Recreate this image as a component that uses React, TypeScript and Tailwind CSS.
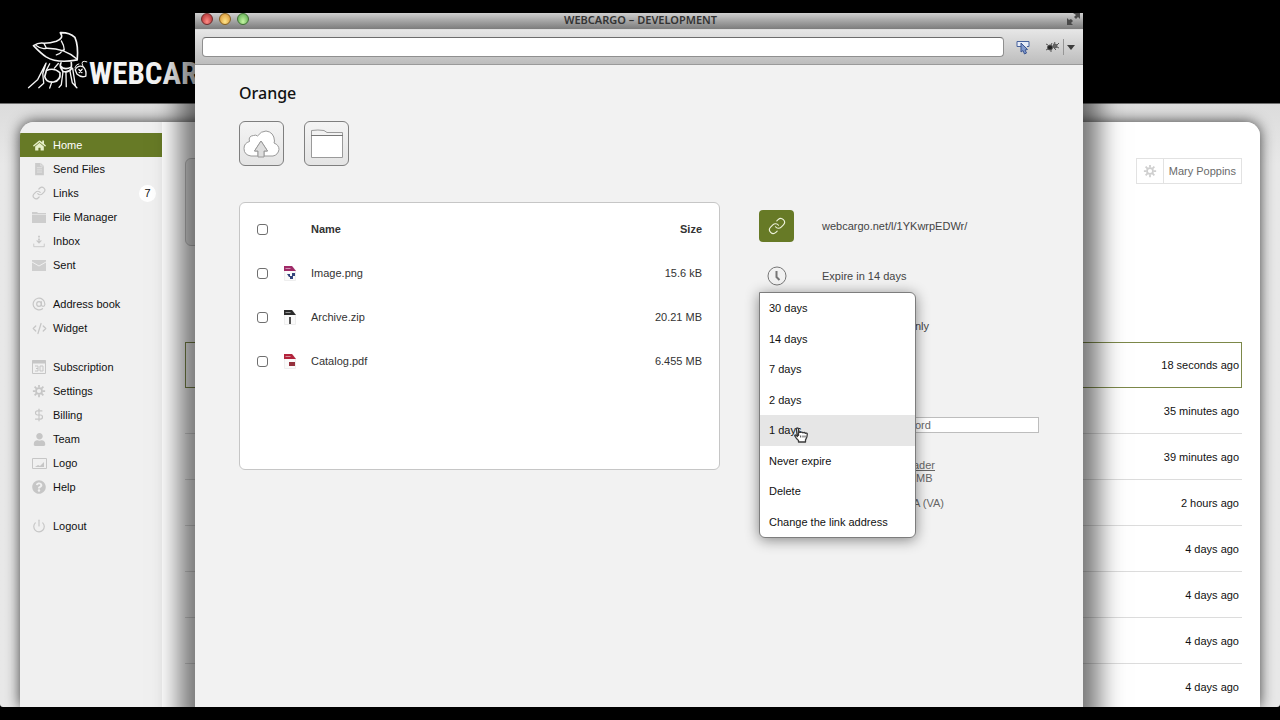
import React from 'react';
import { AtSign, CodeXml, DollarSign, Link as LinkIcon, Power } from 'lucide-react';
import { FaHome, FaQuestionCircle, FaUser } from 'react-icons/fa';

const LeafAnt = () => (
  <svg viewBox="78 94 186 178" className="h-[59px] w-[62px] shrink-0" fill="none" stroke="#f4f4f4" strokeWidth="5" strokeLinecap="round" strokeLinejoin="round">
    <path d="M97 138 Q113 128 129 131 Q148 131 166 125 Q190 116 178 99 Q205 98 222 113 Q233 138 229 181 Q170 193 135 172 Q120 162 97 138Z" />
    <path d="M105 138 Q120 150 136 146 Q190 145 227 178 M181 124 Q190 139 190 151 M166 166 Q178 163 187 151 M129 132 L136 146" strokeWidth="4" />
    <path d="M136 213 Q160 203 177 220 Q180 243 158 248 Q134 250 131 231Z" />
    <path d="M178 199 Q190 214 211 203 Q212 196 211 189 M180 190 Q175 198 181 208 L186 216 Q202 221 212 207" />
    <path d="M223 211 Q232 195 247 202 Q258 213 255 230 Q241 236 228 224Z M234 210 L243 219 M244 209 L235 219" strokeWidth="4" />
    <path d="M246 200 Q237 180 258 187 M222 205 Q226 193 234 193" strokeWidth="3" />
    <path d="M135 191 L110 240 L82 265 M135 191 L125 223 L128 252 L113 265 M146 193 L136 212 M186 217 L181 256 L174 264 M195 218 L196 262 M207 214 L214 250 L228 265 M152 249 L146 266 M215 206 L224 262 M172 192 L160 206" strokeWidth="4" />
  </svg>
);

const Gear = ({ className }: { className: string }) => (
  <svg viewBox="0 0 16 16" className={className} fill="none" stroke="currentColor">
    <circle cx="8" cy="8" r="3.4" strokeWidth="2" />
    <path d="M8 1v3M8 12v3M1 8h3M12 8h3M3 3l2.2 2.2M10.8 10.8L13 13M13 3l-2.2 2.2M5.2 10.8L3 13" strokeWidth="2" />
  </svg>
);

const PageIcon = () => (
  <svg viewBox="0 0 12 16" className="h-[14px] w-[11px]" fill="#cbcbcb">
    <path d="M1 1h6.500l3.500 3.500V15H1z" />
    <path d="M7.500 1v3.500H11M3 6.500h6M3 9h6M3 11.500h6" stroke="#e4e4e4" fill="none" />
  </svg>
);

const FolderIcon = () => (
  <svg viewBox="0 0 14 12" className="h-3 w-[14px]">
    <path d="M0 1h5l1 1h8v10H0z" fill="#cdcdcd" />
    <path d="M0 3.500h14" stroke="#e2e2e2" />
  </svg>
);

const InboxIcon = () => (
  <svg viewBox="0 0 16 16" className="h-[14px] w-[14px]" fill="none" stroke="#c6c6c6">
    <path d="M2 11v3.500h12V11" />
    <path d="M8 2v6" strokeWidth="2" strokeDasharray="2 1" />
    <path d="M4.500 7.500h7L8 11z" fill="#c6c6c6" stroke="none" />
  </svg>
);

const EnvelopeIcon = () => (
  <svg viewBox="0 0 14 11" className="h-[11px] w-[14px]">
    <path d="M0 0h14v11H0z" fill="#cfcfcf" />
    <path d="M0 2l7 4 7-4" fill="none" stroke="#efefef" />
  </svg>
);

const CalendarIcon = () => (
  <svg viewBox="0 0 14 14" className="h-[14px] w-[14px]" fill="none" stroke="#c6c6c6">
    <path d="M.5 .5h13v13H.5z" />
    <path d="M0 2h14" strokeWidth="3" />
    <path d="M3 6h3v5H3M4 8.500h2M8 6h3v5H8z" />
  </svg>
);

const PictureIcon = () => (
  <svg viewBox="0 0 15 11" className="h-[11px] w-[15px]" fill="none" stroke="#c6c6c6">
    <path d="M.5 .5h14v10H.5z" />
    <path d="M3 9l3-2 2 1 4-4v5z" fill="#c6c6c6" stroke="none" />
  </svg>
);

const menuGroups = [
  [
    { label: 'Home', icon: <FaHome size={13} />, active: true },
    { label: 'Send Files', icon: <PageIcon /> },
    { label: 'Links', icon: <LinkIcon size={14} strokeWidth={2} />, badge: 7 },
    { label: 'File Manager', icon: <FolderIcon /> },
    { label: 'Inbox', icon: <InboxIcon /> },
    { label: 'Sent', icon: <EnvelopeIcon /> },
  ],
  [
    { label: 'Address book', icon: <AtSign size={14} strokeWidth={2} /> },
    { label: 'Widget', icon: <CodeXml size={15} strokeWidth={2} /> },
  ],
  [
    { label: 'Subscription', icon: <CalendarIcon /> },
    { label: 'Settings', icon: <Gear className="h-[14px] w-[14px]" /> },
    { label: 'Billing', icon: <DollarSign size={14} strokeWidth={2} /> },
    { label: 'Team', icon: <FaUser size={13} /> },
    { label: 'Logo', icon: <PictureIcon /> },
    { label: 'Help', icon: <FaQuestionCircle size={14} /> },
  ],
  [{ label: 'Logout', icon: <Power size={14} strokeWidth={2} /> }],
] as { label: string; icon: React.ReactNode; active?: boolean; badge?: number }[][];

const activity = [
  '18 seconds ago',
  '35 minutes ago',
  '39 minutes ago',
  '2 hours ago',
  '4 days ago',
  '4 days ago',
  '4 days ago',
  '4 days ago',
];

const files = [
  { name: 'Image.png', size: '15.6 kB', color: '#a02a68', mark: '#34457c', glyph: 'M3 8h3v2h2V7h3v3H9v3H6v-2H5z' },
  { name: 'Archive.zip', size: '20.21 MB', color: '#2b2b2b', mark: '#555555', glyph: 'M5 7h2v7H5z' },
  { name: 'Catalog.pdf', size: '6.455 MB', color: '#b3243c', mark: '#94303c', glyph: 'M5 8h6v4H5z' },
];

const expiryOptions = [
  '30 days',
  '14 days',
  '7 days',
  '2 days',
  '1 days',
  'Never expire',
  'Delete',
  'Change the link address',
];

const Sidebar = () => (
  <nav className="flex w-[142px] shrink-0 flex-col gap-[15px] bg-[#f0f0f0] pt-[11px]">
    {menuGroups.map((group, i) => (
      <ul key={i}>
        {group.map((item) => (
          <li key={item.label}>
            <a
              href="#"
              className={
                item.active
                  ? 'flex h-6 items-center bg-[#677a26] pr-2 pl-[10px] text-white'
                  : 'flex h-6 items-center pr-[6px] pl-[10px] text-[#111111]'
              }
            >
              <span className={item.active ? 'flex w-[18px] justify-center text-[#e6efc8]' : 'flex w-[18px] justify-center text-[#c6c6c6]'}>
                {item.icon}
              </span>
              <span className="ml-[5px] flex-1">{item.label}</span>
              {item.badge && (
                <span className="flex h-[17px] w-[17px] items-center justify-center rounded-full bg-white">{item.badge}</span>
              )}
            </a>
          </li>
        ))}
      </ul>
    ))}
  </nav>
);

const Activity = () => (
  <div className="flex-1 overflow-hidden bg-white pt-9 pr-[18px] pl-[23px]">
    <div className="flex items-start justify-between">
      <div className="h-[88px] w-1/2 rounded-md border border-[#c4c4c4] bg-[#ededed]"></div>
      <button className="flex h-[26px] items-center border border-[#e2e2e2] text-[#6a6a6a]">
        <span className="flex h-full w-[27px] items-center justify-center border-r border-[#e2e2e2] text-[#cfcfcf]">
          <Gear className="h-[14px] w-[14px]" />
        </span>
        <span className="px-[5px]">Mary Poppins</span>
      </button>
    </div>
    <ul className="mt-24 text-right text-[#111111]">
      {activity.map((time, i) => (
        <li
          key={i}
          className={
            i === 0
              ? 'flex h-[46px] items-center justify-end border border-[#7c8849] pr-[2px]'
              : 'flex h-[46px] items-center justify-end border-b border-[#dcdcdc] pr-[3px]'
          }
        >
          {time}
        </li>
      ))}
    </ul>
  </div>
);

const WindowChrome = () => (
  <>
    <div className="flex h-4 items-start bg-linear-to-b from-[#cfcfcf] to-[#7c7c7c] pr-[3px] pl-[6px]">
      <div className="flex w-[60px] gap-[6px]">
        <button aria-label="Close" className="h-3 w-3 rounded-full border border-[#6e2c2c] bg-radial-[at_50%_75%] from-[#ff8d86] to-[#a82428]"></button>
        <button aria-label="Minimize" className="h-3 w-3 rounded-full border border-[#856020] bg-radial-[at_50%_75%] from-[#ffe58a] to-[#d48b2c]"></button>
        <button aria-label="Zoom" className="h-3 w-3 rounded-full border border-[#3f6e33] bg-radial-[at_50%_75%] from-[#c6f7a4] to-[#4fa045]"></button>
      </div>
      <h1 className="flex-1 text-center font-['Noto_Sans',sans-serif] text-[11px] leading-[13px] font-semibold text-[#333333]">
        WEBCARGO – DEVELOPMENT
      </h1>
      <div className="flex w-[60px] justify-end">
        <svg viewBox="0 0 13 12" className="h-3 w-[13px]" fill="#4a4a4a">
          <path d="M6 0h7v6l-2-2-2 2-2-2 2-2zM0 5l2 2 2-1 2 2-2 2 2 2H0z" />
        </svg>
      </div>
    </div>
    <div className="flex h-9 items-center border-t border-b border-t-[#dedede] border-b-[#9a9a9a] bg-linear-to-b from-[#e6e6e6] to-[#bdbdbd] pr-2 pl-[7px]">
      <input
        type="text"
        aria-label="Address"
        className="h-5 min-w-0 flex-1 rounded-sm border border-[#8f8f8f] border-t-[#6c6c6c] bg-white px-2"
      />
      <button aria-label="Inspect" className="ml-3">
        <svg viewBox="0 0 14 15" className="h-[15px] w-[14px]">
          <path d="M5 6.500H1v-5h12v5h-2" fill="#e6ecf8" stroke="#46619c" />
          <path d="M5 3v9l2-1.500L8.500 14l2-1L9 10l2.500-.5z" fill="#8099cc" stroke="#3a5490" />
        </svg>
      </button>
      <button aria-label="Debug" className="ml-[15px]">
        <svg viewBox="0 0 14 12" className="h-3 w-[14px]" stroke="#555555" fill="none">
          <ellipse cx="5" cy="6.500" rx="2.500" ry="2.500" fill="#222222" />
          <circle cx="10" cy="5" r="2" fill="#666666" />
          <path d="M3 4L1 3M6 4l1-2M9 3l1-2M12 4l2-2M3 8l-2 1M6 9v2M9 7l2 2M12 6l2 1" />
        </svg>
      </button>
      <button aria-label="More tools" className="ml-1 flex h-4 items-center border-l border-[#969696] pl-[3px]">
        <svg viewBox="0 0 8 5" className="h-[5px] w-2" fill="#3c3c3c">
          <path d="M0 0h8L4 5z" />
        </svg>
      </button>
    </div>
  </>
);

const FileTable = () => (
  <div className="h-[268px] min-w-0 flex-1 rounded-md border border-[#c6c6c6] bg-white pt-1 pr-[17px] pl-[17px]">
    <table className="w-full table-fixed text-[#333333]">
      <thead>
        <tr className="h-11">
          <th className="w-[27px] text-left">
            <input type="checkbox" aria-label="Select all" className="block h-[11px] w-[11px] appearance-none rounded-[3px] border border-[#6f6f6f] bg-white" />
          </th>
          <th className="w-[27px]"></th>
          <th className="text-left font-bold">Name</th>
          <th className="w-24 text-right font-bold">Size</th>
        </tr>
      </thead>
      <tbody>
        {files.map((file) => (
          <tr key={file.name} className="h-11">
            <td>
              <input type="checkbox" aria-label={file.name} className="block h-[11px] w-[11px] appearance-none rounded-[3px] border border-[#6f6f6f] bg-white" />
            </td>
            <td>
              <svg viewBox="0 0 12 15" className="h-[15px] w-3">
                <path d="M.5 .5h8l3 4v10H.5z" fill="#fafafa" stroke="#eeeeee" />
                <path d="M0 0h8l4 5H0z" fill={file.color} />
                <path d="M1.500 2.500h5" stroke="#ffffff" strokeOpacity=".5" />
                <path d={file.glyph} fill={file.mark} />
              </svg>
            </td>
            <td>{file.name}</td>
            <td className="text-right">{file.size}</td>
          </tr>
        ))}
      </tbody>
    </table>
  </div>
);

const ExpiryMenu = () => (
  <ul className="absolute top-[90px] left-0 flex h-[246px] w-[157px] flex-col overflow-hidden rounded-md rounded-tl-none border border-[#7d7d7d] bg-white shadow-[0_2px_14px_rgba(0,0,0,0.45)]">
    {expiryOptions.map((option) => (
      <li key={option} className="flex flex-1">
        <button
          className={
            option === '1 days'
              ? 'w-full bg-[#e6e6e6] px-[9px] text-left text-[#111111]'
              : 'w-full px-[9px] text-left text-[#111111]'
          }
        >
          {option}
        </button>
      </li>
    ))}
  </ul>
);

const HandCursor = () => (
  <svg viewBox="0 0 14 16" className="absolute top-[225px] left-[35px] h-4 w-[14px]" fill="#ffffff" stroke="#3a3a3a" strokeWidth="1.300" strokeLinejoin="round">
    <path d="M4.500 9V2.200Q4.500 1 3.300 1Q2.200 1 2.300 2.200L3.500 9.500L1.800 8Q.8 7.600 .7 8.700Q2.500 12 4.500 13.500V15h7v-2Q13.300 10.500 13.300 7Q13 5.800 11.500 6.300Q10.500 5 9 5.800Q8 4.700 6.700 5.400L4.500 5.200" />
    <path d="M6.700 8.500v2M9 8.500v2M11 8.500v2" strokeWidth="1" />
  </svg>
);

const LinkDetails = () => (
  <div className="relative w-[324px] shrink-0 text-[#444444]">
    <div className="flex h-12 items-center">
      <button aria-label="Copy link" className="flex h-8 w-[35px] items-center justify-center rounded bg-[#677a26] text-[#eef2dc]">
        <LinkIcon size={18} strokeWidth={1.5} />
      </button>
      <a href="#" className="ml-7">webcargo.net/l/1YKwrpEDWr/</a>
    </div>
    <div className="mt-[2px] flex h-12 items-center">
      <span className="flex w-[35px] justify-center">
        <svg viewBox="0 0 20 20" className="h-5 w-5" fill="none" stroke="#777777">
          <circle cx="10" cy="10" r="9" />
          <path d="M9.500 5v6l3 3" strokeWidth="2" />
        </svg>
      </span>
      <span className="ml-7">Expire in 14 days</span>
    </div>
    <div className="flex h-[52px] items-center pl-[156px]">nly</div>
    <div className="mt-[65px] pr-11 pl-[63px]">
      <input
        type="text"
        aria-label="Password"
        defaultValue="ord"
        className="block h-4 w-full border border-[#bdbdbd] bg-white pl-[92px] text-[#6a6a6a]"
      />
    </div>
    <div className="mt-[26px] pl-[154px] leading-[13px] text-[#666666]">
      <a href="#" className="block underline">ader</a>
      <p className="pl-[3px]">MB</p>
      <p className="mt-3">A (VA)</p>
    </div>
    <ExpiryMenu />
    <HandCursor />
  </div>
);

const PopupWindow = () => (
  <section className="absolute top-[13px] right-[197px] bottom-[13px] left-[195px] flex flex-col overflow-hidden bg-[#f2f2f2] shadow-[0_10px_24px_16px_rgba(0,0,0,0.54)]">
    <WindowChrome />
    <div className="flex-1 pl-11">
      <h2 className="pt-4 font-['Noto_Sans',sans-serif] text-base leading-6 font-medium text-[#111111]">Orange</h2>
      <div className="mt-4 flex gap-5">
        <button aria-label="Upload" className="flex h-[45px] w-[45px] items-center justify-center rounded-md border border-[#7f7f7f] bg-linear-to-b from-[#f4f4f4] to-[#e4e4e4]">
          <svg viewBox="0 0 37 28" className="h-7 w-[37px]" fill="#ffffff" stroke="#9a9a9a" strokeLinejoin="round">
            <path d="M15 26H8Q1 25 1 18.500Q1 13 6.500 11.500Q5 6 10.500 5.500Q13 4.500 14.500 6Q18 1 23 1Q31 2 31.500 11L31 13Q36 15 36 19.500Q35 25 30 26H21V21H24.500L18 11L11.500 21H15Z" />
            <path d="M18 11L24.500 21H21V27H15V21H11.500Z" fill="#dedede" />
          </svg>
        </button>
        <button aria-label="New folder" className="flex h-[45px] w-[45px] items-center justify-center rounded-md border border-[#7f7f7f] bg-linear-to-b from-[#f4f4f4] to-[#e4e4e4]">
          <svg viewBox="0 0 34 30" className="h-[30px] w-[34px]" fill="#ffffff" stroke="#9a9a9a">
            <path d="M1.500 6.500V1.500Q8 .5 14 1.500L17 3.500H32.500V6.500" fill="#f2f2f2" />
            <path d="M1.500 6.500h31v22h-31z" />
            <path d="M1 6.500h32" stroke="#777777" />
          </svg>
        </button>
      </div>
      <div className="mt-9 flex gap-[39px]">
        <FileTable />
        <LinkDetails />
      </div>
    </div>
  </section>
);

export default function App() {
  return (
    <div className="relative flex h-screen flex-col overflow-hidden bg-black pb-[13px] font-['Liberation_Sans',Arial,sans-serif] text-[11px] leading-4">
      <header className="flex h-[104px] shrink-0 items-end border-b border-[#6e6e6e] pb-[13px] pl-[27px]">
        <LeafAnt />
        <span className="font-['Roboto_Condensed','Liberation_Sans',sans-serif] text-[31px] leading-8 font-bold text-[#f4f4f4]">WEBCARGO</span>
      </header>
      <main className="flex min-h-0 flex-1 overflow-hidden rounded-b-[3px] bg-linear-to-b from-[#dcdcdc] to-[#e8e8e8] to-10% px-5 pt-[18px]">
        <div className="flex flex-1 overflow-hidden rounded-t-[14px] bg-[#f0f0f0] shadow-[0_0_14px_rgba(0,0,0,0.75)]">
          <Sidebar />
          <Activity />
        </div>
      </main>
      <PopupWindow />
    </div>
  );
}
